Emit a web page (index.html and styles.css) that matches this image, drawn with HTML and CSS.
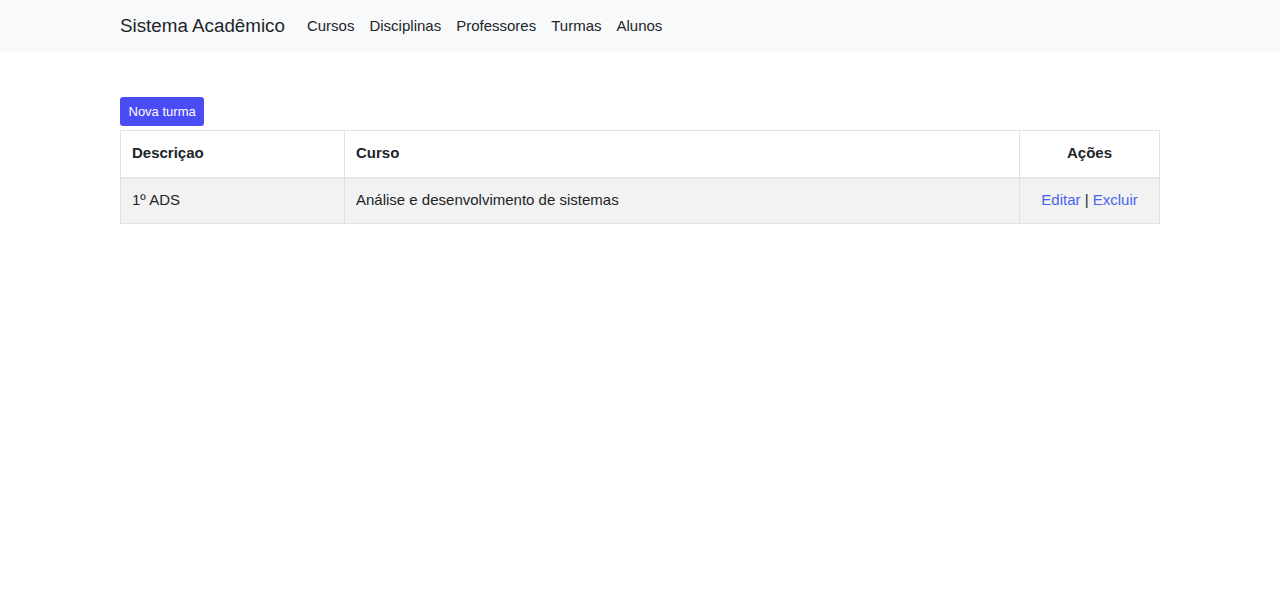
FILE: index.html
```html
<!DOCTYPE html>
<html lang="pt-BR">
<head>
<meta charset="utf-8">
<title>Turmas</title>
<link rel="stylesheet" href="styles.css">
</head>
<body>
<nav class="navbar">
  <div class="container nav-inner">
    <a class="brand" href="#">Sistema Acadêmico</a>
    <ul class="nav-links">
      <li><a href="#">Cursos</a></li>
      <li><a href="#">Disciplinas</a></li>
      <li><a href="#">Professores</a></li>
      <li><a href="#">Turmas</a></li>
      <li><a href="#">Alunos</a></li>
    </ul>
  </div>
</nav>
<main class="container main">
  <a class="btn" href="#">Nova turma</a>
  <table class="table">
    <thead>
      <tr>
        <th class="col-desc">Descriçao</th>
        <th class="col-curso">Curso</th>
        <th class="col-acoes">Ações</th>
      </tr>
    </thead>
    <tbody>
      <tr>
        <td>1º ADS</td>
        <td>Análise e desenvolvimento de sistemas</td>
        <td class="acoes"><a href="#">Editar</a> | <a href="#">Excluir</a></td>
      </tr>
    </tbody>
  </table>
</main>
</body>
</html>
```
FILE: styles.css
```css
* { box-sizing: border-box; }
html, body { margin: 0; padding: 0; }
body {
  font-family: "Liberation Sans", Arial, sans-serif;
  font-size: 15px;
  color: #212529;
  background: #fff;
}
a { text-decoration: none; }
.container { width: 1040px; margin: 0 auto; }
.navbar { background: #f8f9fa; height: 52px; }
.nav-inner { display: flex; align-items: center; height: 52px; padding-bottom: 1px; }
.brand { font-size: 18.8px; color: #212529; margin-right: 14.5px; }
.nav-links { display: flex; list-style: none; margin: 0; padding: 0; }
.nav-links a { display: block; padding: 0 7.5px; color: #212529; font-size: 15px; }
.main { padding-top: 45px; }
.btn {
  display: inline-block;
  background: #4a4cf5;
  color: #fff;
  font-size: 13px;
  line-height: 19px;
  padding: 5px 8.5px;
  border-radius: 3px;
}
.table {
  width: 100%;
  border-collapse: collapse;
  margin-top: 4px;
}
.table th, .table td {
  border: 1px solid #dee2e6;
  padding: 0 11px 2px;
  text-align: left;
  vertical-align: middle;
}
.table th { font-weight: bold; height: 47px; border-bottom: 2px solid #e3e6ea; }
.table td { height: 46px; background: #f2f2f2; padding-bottom: 3px; }
.col-desc { width: 224px; }
.col-acoes { width: 140px; }
.table th.col-acoes, .table td.acoes { text-align: center; }
.acoes a { color: #4a63ee; }
```
